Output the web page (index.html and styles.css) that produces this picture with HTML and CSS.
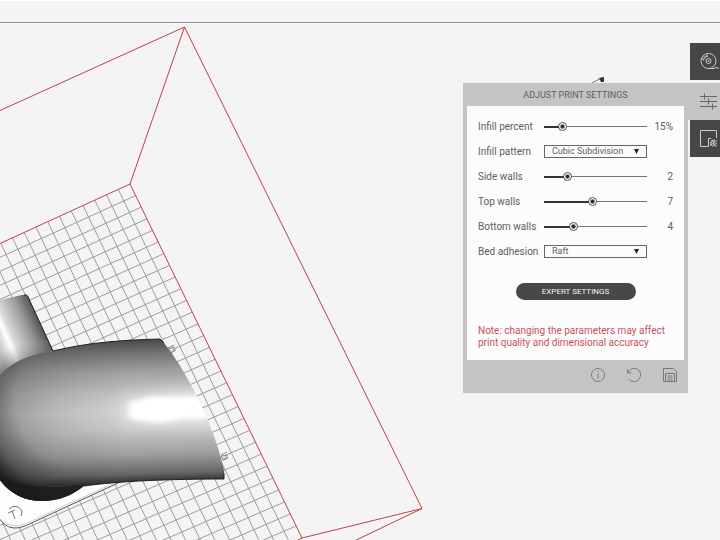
FILE: index.html
```html
<!DOCTYPE html>
<html lang="en">
<head>
<meta charset="utf-8">
<title>Print settings</title>
<link rel="stylesheet" href="styles.css">
</head>
<body>
<svg class="scene" viewBox="0 0 720 540" preserveAspectRatio="xMinYMin slice" aria-hidden="true">
  <defs>
    <linearGradient id="bodyShade" gradientUnits="userSpaceOnUse" x1="110" y1="341" x2="114" y2="483">
      <stop offset="0" stop-color="#4a4a4a"/>
      <stop offset=".08" stop-color="#6e6e6e"/>
      <stop offset=".22" stop-color="#a0a0a0"/>
      <stop offset=".38" stop-color="#c6c6c6"/>
      <stop offset=".5" stop-color="#d6d6d6"/>
      <stop offset=".62" stop-color="#cacaca"/>
      <stop offset=".8" stop-color="#a0a0a0"/>
      <stop offset=".94" stop-color="#666"/>
      <stop offset="1" stop-color="#303030"/>
    </linearGradient>
    <linearGradient id="leftShade" gradientUnits="userSpaceOnUse" x1="0" y1="0" x2="130" y2="0">
      <stop offset="0" stop-color="#444" stop-opacity=".45"/>
      <stop offset=".45" stop-color="#555" stop-opacity=".2"/>
      <stop offset="1" stop-color="#666" stop-opacity="0"/>
    </linearGradient>
    <radialGradient id="ballShade" gradientUnits="userSpaceOnUse" cx="80" cy="400" r="108">
      <stop offset=".6" stop-color="#222" stop-opacity="0"/>
      <stop offset=".85" stop-color="#222" stop-opacity=".35"/>
      <stop offset="1" stop-color="#111" stop-opacity=".8"/>
    </radialGradient>
    <linearGradient id="ballFade" x1="0" x2="1">
      <stop offset=".2" stop-color="#fff"/>
      <stop offset=".5" stop-color="#000"/>
    </linearGradient>
    <mask id="ballMask"><rect x="-5" y="330" width="230" height="175" fill="url(#ballFade)"/></mask>
    <linearGradient id="pipeShade" gradientUnits="userSpaceOnUse" x1="-6" y1="342" x2="42" y2="321">
      <stop offset="0" stop-color="#bbb"/>
      <stop offset=".17" stop-color="#e4e4e4"/>
      <stop offset=".26" stop-color="#fff"/>
      <stop offset=".36" stop-color="#dadada"/>
      <stop offset=".7" stop-color="#979797"/>
      <stop offset=".95" stop-color="#555"/>
      <stop offset="1" stop-color="#333"/>
    </linearGradient>
    <linearGradient id="pipeEnd" gradientUnits="userSpaceOnUse" x1="10" y1="347" x2="18" y2="368">
      <stop offset="0" stop-color="#999" stop-opacity="0"/>
      <stop offset="1" stop-color="#555" stop-opacity=".65"/>
    </linearGradient>
    <filter id="soft" x="-20%" y="-50%" width="140%" height="200%"><feGaussianBlur stdDeviation="3 2"/></filter>
    <filter id="wide" x="-30%" y="-80%" width="160%" height="260%"><feGaussianBlur stdDeviation="12 8"/></filter>
    <clipPath id="bodyClip"><path d="M-3 379C10 362 28 355 53 351C90 342 125 340 160 339C180 358 215 425 224 470V479C170 479 120 481 84 486C72 496 57 501 42 501C24 501 8 493 -3 476Z"/></clipPath>
  </defs>
  <path id="grid" class="grid"/>
  <g class="bounds">
    <path d="M0 110.500L184.500 27L422 508.500L302 538L130 184L0 243.500"/>
    <path d="M184.500 27L130 184M302 538L296 541M422 508.500L350 543"/>
  </g>
  <path fill="#fdfdfd" stroke="#555" d="M-4 515L4 524Q13 531 25 526L118 483L70 470L-4 472Z"/>
  <path fill="none" stroke="#ccc" d="M3 521Q13 529 25 524L114 483"/>
  <path class="screw" d="M9 509C14 504 21 507 22 512L21 516M8 513L15 510M12 511L15 519"/>
  <path fill="url(#pipeShade)" d="M-3 301Q12 297 22 295Q28 294 29 299L53 351Q22 356 -3 378Z"/>
  <path fill="url(#pipeEnd)" d="M-3 345L48 340L53 351Q22 356 -3 378Z"/>
  <path class="edge" d="M24 295Q28 294 29 299L53 351"/>
  <g class="pins"><path d="M168 349L174 347V351L170 353ZM221 456L227 455V458L223 460Z"/><path d="M168 348L174 345M171 353L176 350M221 455L227 452M223 460L228 458"/></g>
  <g clip-path="url(#bodyClip)">
    <path fill="url(#bodyShade)" d="M-5 330H230V510H-5Z"/>
    <path fill="url(#leftShade)" d="M-5 330H130V510H-5Z"/>
    <path fill="url(#ballShade)" mask="url(#ballMask)" d="M-5 330H225V505H-5Z"/>
    <path fill="#fff" opacity=".6" filter="url(#wide)" d="M125 400Q160 390 225 390V424H130Z"/>
    <path fill="#fff" filter="url(#soft)" d="M129 402L150 397L230 396V417L180 419L160 423L129 419Z"/>
    <path fill="#1c1c1c" opacity=".8" d="M-2 476Q35 493 86 484Q60 506 35 503Q10 499 -2 476Z"/>
  </g>
  <path class="edge" d="M53 351C90 342 125 340 160 339L164 343M84 486C120 481 170 479 224 479V473"/>
  <path fill="none" stroke="#777" d="M592 83L601 78"/>
  <path fill="#333" d="M599 78L604 77V82L601 82Z"/>
</svg>

<header class="topbar"></header>

<main class="workspace">
  <form class="panel">
    <h1 class="panel-title">ADJUST PRINT SETTINGS</h1>
    <div class="panel-body">
      <div class="row">
        <label for="infill">Infill percent</label>
        <input class="slider" id="infill" type="range" min="0" max="100" value="15" style="--fill:15%">
        <output for="infill">15%</output>
      </div>
      <div class="row">
        <label for="pattern">Infill pattern</label>
        <span class="picker"><select id="pattern"><option>Cubic Subdivision</option></select></span>
      </div>
      <div class="row">
        <label for="side">Side walls</label>
        <input class="slider" id="side" type="range" min="0" max="10" value="2" style="--fill:20%">
        <output for="side">2</output>
      </div>
      <div class="row">
        <label for="top">Top walls</label>
        <input class="slider" id="top" type="range" min="0" max="15" value="7" style="--fill:47%">
        <output for="top">7</output>
      </div>
      <div class="row">
        <label for="bottom">Bottom walls</label>
        <input class="slider" id="bottom" type="range" min="0" max="15" value="4" style="--fill:27%">
        <output for="bottom">4</output>
      </div>
      <div class="row">
        <label for="adhesion">Bed adhesion</label>
        <span class="picker"><select id="adhesion"><option>Raft</option></select></span>
      </div>
      <button class="expert" type="button">EXPERT SETTINGS</button>
      <p class="note">Note: changing the parameters may affect print quality and dimensional accuracy</p>
    </div>
    <footer class="actions">
      <button type="button" aria-label="Information"><svg viewBox="0 0 16 16"><circle cx="8" cy="8" r="6.500"/><path d="M8 6.500V11.500M8 4V5.200"/></svg></button>
      <button type="button" aria-label="Reset"><svg viewBox="0 0 16 16"><path d="M1.500 2V6H5.500M1.800 5.800C4 .5 10 .3 13 3.500C16 7 14.500 12.500 10.500 14.200C7.500 15.300 4.500 14.300 2.800 12"/></svg></button>
      <button type="button" aria-label="Save"><svg viewBox="0 0 16 16"><path d="M1.500 1.500H11.500L14.500 4.500V14.500H1.500ZM3.500 14.500V6.500H12.500V14.500M5.500 9H10.500M5.500 11H10.500M5.500 13H10.500"/></svg></button>
    </footer>
  </form>
  <nav class="tabs" aria-label="Tools">
    <button type="button" aria-label="Material"><svg viewBox="0 0 20 20"><circle cx="9.500" cy="9" r="7.500"/><circle cx="9.500" cy="9" r="2.500"/><circle cx="9.500" cy="9" r=".5"/><path d="M4.500 8.500C4.800 6 6.500 4.300 9 4M2.800 6.500L5 7.500M4.500 4L6.500 6M7.500 2.500L8.500 4.500M10 16.500H15Q17 14.500 20 16.500"/></svg></button>
    <button type="button" class="active" aria-label="Print settings"><svg viewBox="0 0 20 20"><path d="M1 4.500H18M1 9.500H18M1 14.500H18M5.500 1.500V7.500M9.500 6.500V12.500M13.500 11.500V17.500"/></svg></button>
    <button type="button" aria-label="Layout"><svg viewBox="0 0 20 20"><path d="M17.500 9V1.500H1.500V17.500H9.500V9.500H12"/><path d="M11 14L16 10.500M11 16.500L18 11.500M13 17.500L18 14M12 12L14 11M16 17.500L18 16M12 13V17M15 11V17"/></svg></button>
  </nav>
</main>
<script src="grid.js"></script>
</body>
</html>
```
FILE: styles.css
```css
* {
  box-sizing: border-box;
}

body {
  margin: 0;
  min-height: 100vh;
  overflow: hidden;
  background: #f4f4f4;
  color: #606060;
  font: 10px/12px Roboto, "Liberation Sans", sans-serif;
}

button,
select {
  font: inherit;
  color: inherit;
  border: 0;
  margin: 0;
  padding: 0;
}

svg {
  display: block;
  fill: none;
}

.scene {
  position: absolute;
  inset: 0;
  width: 100%;
  height: 100%;
  z-index: -1;
}

.grid {
  stroke: #9c9c9c;
}

.bounds {
  stroke: #bd4249;
}

.screw {
  stroke: #777;
}

.edge {
  stroke: #222;
}

.pins {
  fill: #ddd;
  stroke: #888;
}

.topbar {
  height: 23px;
  border-top: 1px solid #fff;
  border-bottom: 1px solid #929292;
}

.workspace {
  display: flex;
  justify-content: flex-end;
  align-items: flex-start;
  padding-top: 20px;
}

.panel {
  width: 225px;
  margin-top: 40px;
  padding: 0 4px;
  background: #c4c4c4;
}

.panel-title {
  margin: 0;
  padding-top: 1px;
  font-size: 9px;
  font-weight: 400;
  line-height: 22px;
  text-align: center;
}

.panel-body {
  padding: 8px 11px 11px;
  background: #fcfcfc;
}

.row {
  display: grid;
  grid-template-columns: 66px 1fr 26px;
  align-items: center;
  height: 25px;
}

.row label {
  white-space: nowrap;
}

.row output {
  text-align: right;
}

.slider {
  appearance: none;
  width: 100%;
  height: 11px;
  margin: 0;
  background:
    linear-gradient(#333, #333) 0 5px / var(--fill) 2px no-repeat,
    linear-gradient(#777, #777) 0 5px / 100% 1px no-repeat;
}

.slider::-webkit-slider-thumb {
  appearance: none;
  width: 9px;
  height: 9px;
  border: 1px solid #555;
  border-radius: 50%;
  background: radial-gradient(circle, #222 1px, #fcfcfc 3px);
}

.picker {
  display: flex;
  align-items: center;
  height: 13px;
  border: 1px solid #666;
}

.picker select {
  appearance: none;
  flex: 1;
  min-width: 0;
  height: 11px;
  padding-left: 7px;
  background: none;
  font-size: 9px;
  line-height: 11px;
}

.picker::after {
  content: "";
  width: 5px;
  height: 5px;
  margin-right: 7px;
  background: #222;
  clip-path: polygon(0 0, 100% 0, 50% 100%);
}

.expert {
  display: block;
  width: 120px;
  height: 17px;
  margin: 19px auto 25px;
  border-radius: 9px;
  background: #484848;
  color: #f4f4f4;
  font-size: 8px;
  line-height: 17px;
}

.note {
  margin: 0;
  color: #c9505f;
  line-height: 12px;
}

.actions {
  display: flex;
  justify-content: flex-end;
  gap: 20px;
  height: 33px;
  padding: 7px 6px 0;
}

.actions button {
  width: 16px;
  height: 16px;
  background: none;
}

.actions svg {
  stroke: #7a7a7a;
}

.tabs {
  display: flex;
  flex-direction: column;
  align-items: flex-end;
  width: 32px;
}

.tabs button {
  width: 30px;
  height: 37px;
  padding: 0 0 0 9px;
  background: #464646;
}

.tabs button.active {
  width: 32px;
  margin-top: 3px;
  padding-left: 11px;
  background: #c4c4c4;
}

.tabs svg {
  width: 20px;
  height: 20px;
  stroke: #ccc;
}

.tabs .active svg {
  stroke: #666;
}
```
FILE: grid.js
```js
// Build plate grid, drawn in perspective from its far corner.
const corner = { x: 130, y: 184 };
const edge = { x: 172, y: 354 };
let d = "";

for (let j = 1; j < 30; j++) {
  const u = j / 30;
  const s = u * (0.98 + 0.02 * u);
  const x = corner.x + edge.x * s;
  const y = corner.y + edge.y * s;
  const slope = 0.456 - 0.026 * u;
  d += `M${x} ${y}L0 ${y + x * slope}`;
}

for (let i = 1; i < 36; i++) {
  const x = corner.x - 11.75 * i;
  const y = corner.y + 5.38 * i;
  const lean = 0.486 - 0.001 * i;
  d += `M${x} ${y}L${x + (545 - y) * lean} 545`;
}

document.getElementById("grid").setAttribute("d", d);
```
